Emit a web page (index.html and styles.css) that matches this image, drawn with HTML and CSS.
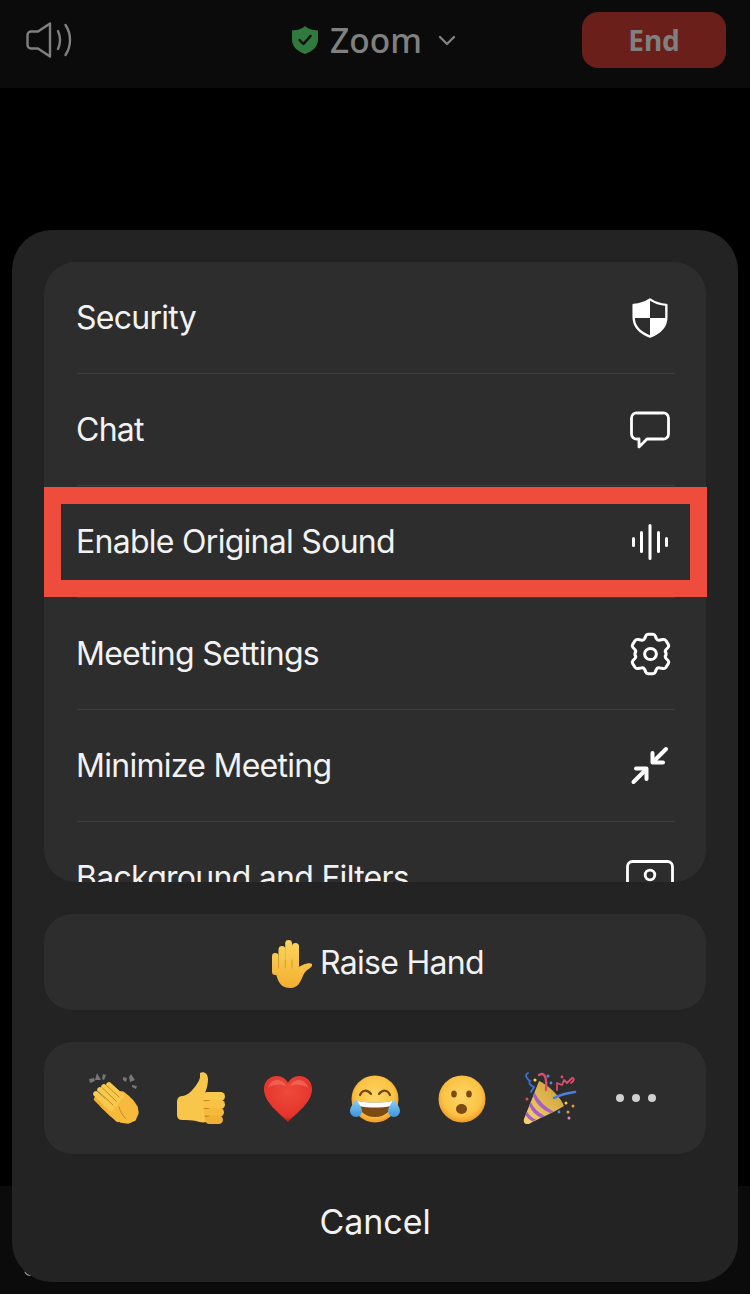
FILE: index.html
```html
<!DOCTYPE html>
<html lang="en">
<head>
    <meta charset="UTF-8">
    <meta name="viewport" content="width=device-width, initial-scale=1.0">
    <title>Zoom Meeting Menu</title>
    <link rel="stylesheet" href="styles.css">
</head>
<body>
    <svg class="defs" width="0" height="0">
        <defs>
            <linearGradient id="skin" x1="0" y1="0" x2="0" y2="1">
                <stop offset="0" stop-color="#fbd25a"/>
                <stop offset="1" stop-color="#f0a92c"/>
            </linearGradient>
            <linearGradient id="hand-skin" gradientUnits="userSpaceOnUse" x1="0" y1="0" x2="0" y2="48">
                <stop offset="0" stop-color="#fbd65e"/>
                <stop offset="1" stop-color="#f3ae30"/>
            </linearGradient>
            <radialGradient id="face" cx="0.5" cy="0.45" r="0.55">
                <stop offset="0" stop-color="#fcd667"/>
                <stop offset="0.75" stop-color="#fbc344"/>
                <stop offset="1" stop-color="#ee9a28"/>
            </radialGradient>
            <radialGradient id="red" cx="0.5" cy="0.35" r="0.65">
                <stop offset="0" stop-color="#ef4a3c"/>
                <stop offset="0.8" stop-color="#e5352b"/>
                <stop offset="1" stop-color="#b81c1a"/>
            </radialGradient>
            <linearGradient id="tear" x1="0" y1="0" x2="0" y2="1">
                <stop offset="0" stop-color="#8fd0f5"/>
                <stop offset="1" stop-color="#3c95dc"/>
            </linearGradient>
            <linearGradient id="cone" x1="0" y1="1" x2="1" y2="0">
                <stop offset="0" stop-color="#f7d66c"/>
                <stop offset="1" stop-color="#c99a35"/>
            </linearGradient>
        </defs>
    </svg>

    <!-- Meeting top bar, dimmed behind the sheet -->
    <header class="topbar">
        <svg class="speaker" viewBox="0 0 46 36" fill="none" stroke="#808080" stroke-width="2.4" stroke-linecap="round" stroke-linejoin="round">
            <path d="M24 1.500 12 9.500H5a3.500 3.500 0 0 0-3.500 3.500v10A3.500 3.500 0 0 0 5 26.500h7l12 8z"/>
            <path d="M32 9c2.500 5.500 2.500 12.500 0 18"/>
            <path d="M39.500 3c6 9 6 21 0 30"/>
        </svg>
        <div class="title">
            <svg class="title-shield" viewBox="0 0 26 28">
                <path d="M13 0c3 3 7 4 13 4.500v9C26 21 20 25.500 13 28 6 25.500 0 21 0 13.500v-9C6 4 10 3 13 0z" fill="#2f7a3c"/>
                <path d="M7.500 14l4 4 7-8" fill="none" stroke="#0b0b0b" stroke-width="2.400" stroke-linecap="round" stroke-linejoin="round"/>
            </svg>
            <span class="title-text">Zoom</span>
            <svg class="title-chevron" viewBox="0 0 18 11" fill="none" stroke="#808080" stroke-width="2.400" stroke-linecap="round" stroke-linejoin="round">
                <path d="M2 2l7 7 7-7"/>
            </svg>
        </div>
        <div class="end-btn">End</div>
    </header>

    <main class="stage"></main>

    <footer class="bottombar">
        <svg class="sliver" viewBox="0 0 10 6" fill="none" stroke="#8a8a8a" stroke-width="1.200" stroke-linecap="round">
            <path d="M1 1c1 2.500 3 3.500 7 3.500"/>
        </svg>
    </footer>

    <!-- Action sheet -->
    <section class="sheet">
        <div class="menu">
            <div class="menu-row">
                <span>Security</span>
                <svg class="icon" viewBox="0 0 40 44">
                    <path d="M20 1.500C25 5 31 7 38 7.500V21c0 10-7.500 17.500-18 21.500C9.500 38.500 2 31 2 21V7.500C9 7 15 5 20 1.500z" fill="none" stroke="#fff" stroke-width="2.600" stroke-linejoin="round"/>
                    <path d="M20 1.500V22H2V7.500C9 7 15 5 20 1.500z" fill="#fff"/>
                    <path d="M20 22h18c0 10-7.500 16.500-18 20.500z" fill="#fff"/>
                </svg>
            </div>
            <div class="menu-row">
                <span>Chat</span>
                <svg class="icon" viewBox="0 0 40 37" fill="none" stroke="#fff" stroke-width="2.800" stroke-linejoin="round">
                    <path d="M7 1.500h26a5 5 0 0 1 5.500 5v16a5 5 0 0 1-5.500 5H17L9 35.500V27.500H7a5 5 0 0 1-5.500-5v-16a5 5 0 0 1 5.500-5z"/>
                </svg>
            </div>
            <div class="menu-row">
                <span>Enable Original Sound</span>
                <svg class="icon icon-wave" viewBox="0 0 40 36" fill="#fff">
                    <rect x="1" y="13" width="3" height="10" rx="1.500"/>
                    <rect x="9" y="7" width="3" height="22" rx="1.500"/>
                    <rect x="17.500" y="0" width="3" height="36" rx="1.500"/>
                    <rect x="26" y="7" width="3" height="22" rx="1.500"/>
                    <rect x="34" y="13" width="3" height="10" rx="1.500"/>
                </svg>
            </div>
            <div class="menu-row">
                <span>Meeting Settings</span>
                <svg class="icon icon-gear" viewBox="0 0 40 40" preserveAspectRatio="none" fill="none" stroke="#fff" stroke-width="2.600" stroke-linejoin="round">
                    <path d="M16 3.500a2.500 2.500 0 0 1 2-1.500h4a2.500 2.500 0 0 1 2 1.500l1 2.500a2.500 2.500 0 0 0 3 1.300l2.700-.5a2.500 2.500 0 0 1 2.500 1.100l2 3.400a2.500 2.500 0 0 1-.2 2.700L33.200 16a2.500 2.500 0 0 0 0 3.100v1.800a2.500 2.500 0 0 0 0 3.100l1.800 2a2.500 2.500 0 0 1 .2 2.700l-2 3.400a2.500 2.500 0 0 1-2.500 1.100l-2.700-.5a2.500 2.500 0 0 0-3 1.300l-1 2.500a2.500 2.500 0 0 1-2 1.500h-4a2.500 2.500 0 0 1-2-1.500l-1-2.500a2.500 2.500 0 0 0-3-1.300l-2.700.5a2.500 2.500 0 0 1-2.500-1.100l-2-3.400a2.500 2.500 0 0 1 .2-2.700l1.800-2a2.500 2.500 0 0 0 0-3.100v-1.800a2.500 2.500 0 0 0 0-3.100L5 14a2.500 2.500 0 0 1-.2-2.700l2-3.400a2.500 2.500 0 0 1 2.500-1.100l2.700.5a2.500 2.500 0 0 0 3-1.300z"/>
                    <circle cx="20" cy="20" r="5"/>
                </svg>
            </div>
            <div class="menu-row">
                <span>Minimize Meeting</span>
                <svg class="icon" viewBox="0 0 40 40" fill="none" stroke="#fff" stroke-width="4" stroke-linecap="round" stroke-linejoin="round">
                    <path d="M36 3 24 15"/>
                    <path d="M22.500 7v9.500H33"/>
                    <path d="M3.500 36 15 24.500"/>
                    <path d="M6 22.500H16.500V33"/>
                </svg>
            </div>
            <div class="menu-row">
                <span>Background and Filters</span>
                <svg class="icon icon-wide" viewBox="0 0 48 36" fill="none" stroke="#fff" stroke-width="2.800">
                    <rect x="1.500" y="1.500" width="45" height="33" rx="5"/>
                    <circle cx="24" cy="15" r="4.800"/>
                </svg>
            </div>
        </div>

        <!-- Highlight drawn over the third row -->
        <div class="highlight"></div>

        <div class="raise-hand">
            <svg class="hand" viewBox="0 0 40 48" fill="url(#hand-skin)">
                <rect x="0" y="13" width="6.500" height="22" rx="3.250"/>
                <rect x="6.500" y="6" width="7" height="24" rx="3.500"/>
                <rect x="13.200" y="0" width="6.800" height="26" rx="3.400"/>
                <rect x="20" y="3" width="7" height="26" rx="3.500"/>
                <path d="M2 24h24v3c3-.5 5-3 9-3.500 3-.5 6 0 5 2.500-1 2-4 3-6 5-3 3-4 8-6 11-2 4-6 6-10 6-6 0-10-3-12-8-2-5-3-10-4-16z"/>
                <path d="M6.500 22v6M13.300 20v8M20 20v8" stroke="#d99a24" stroke-width="0.900" fill="none" stroke-linecap="round"/>
            </svg>
            <span>Raise Hand</span>
        </div>

        <div class="reactions">
            <div class="reaction">
                <svg class="emoji" viewBox="0 0 52 52">
                    <path d="M9 1l4 7-6 0zM15 2l3 1-2 5-2-1zM1 7l5-1 1 3-5 2zM35 5l4 1-1 4-3-2zM43 2l4 6-5 2-1-5zM44 13l5 1-1 3-4-2z" fill="#777"/>
                    <!-- back hand -->
                    <g fill="none" stroke="#efb033" stroke-width="6" stroke-linecap="round">
                        <path d="M9 27 24 42"/>
                        <path d="M15 33 30 47"/>
                    </g>
                    <!-- palm and thumb -->
                    <path d="M20 20 35 20l5 4 5 5 4 6 1 6-3 7-7 3-7-1-8-5-9-11z" fill="#f6bb3c" stroke="#f6bb3c" stroke-width="1.500" stroke-linejoin="round"/>
                    <!-- fingers -->
                    <g fill="none" stroke="#f9c94e" stroke-width="5.600" stroke-linecap="round">
                        <path d="M8 22 23 36"/>
                        <path d="M12 18 27 32"/>
                        <path d="M16 15 30 28"/>
                        <path d="M21 13 33 24"/>
                    </g>
                    <path d="M10.500 19.500 25 33M14.500 16 28.500 29.500M18.500 13.500 31 25M31 35c1 4 3 8 7 12" stroke="#c98a20" stroke-width="1" fill="none" stroke-linecap="round"/>
                </svg>
            </div>
            <div class="reaction">
                <svg class="emoji emoji-thumb" viewBox="0 0 50 52">
                    <path d="M24 1c4-2 8 1 8 6 0 5-1 9-3 14l1 29c-3 1-7 0-10-1-4-1-9-1-14-1-4 0-5-3-5-6V30c0-4 2-6 6-6 4-1 8-4 11-8 4-5 6-9 6-11 0-2 0-4 0-4z" fill="#f8c64a"/>
                    <rect x="27" y="20" width="22" height="9" rx="4.500" fill="#f9c94e"/>
                    <rect x="28" y="28" width="21" height="9" rx="4.500" fill="#f8c244"/>
                    <rect x="28" y="36" width="20" height="8.500" rx="4.250" fill="#f5ba3a"/>
                    <rect x="29" y="43.500" width="18" height="8.500" rx="4.250" fill="#f1b033"/>
                    <path d="M33 28.500H28M33 36.500H28M33 44H29" stroke="#c98a20" stroke-width="1.100" stroke-linecap="round"/>
                </svg>
            </div>
            <div class="reaction">
                <svg class="emoji emoji-round" viewBox="0 0 50 48">
                    <path d="M25 47C15 37 1 27 1 14 1 6 7 1 13.500 1 19 1 23 4 25 8c2-4 6-7 11.500-7C43 1 49 6 49 14c0 13-14 23-24 33z" fill="url(#red)"/>
                    <path d="M5 13c1-5 5-8 9-8s7 2 9 6c-5-2-13-2-18 2zM27 11c2-4 5-6 9-6s8 3 9 8c-5-4-13-4-18-2z" fill="#f47a70" opacity="0.55"/>
                </svg>
            </div>
            <div class="reaction">
                <svg class="emoji emoji-joy" viewBox="0 0 52 48">
                    <circle cx="26" cy="24" r="23.500" fill="url(#face)"/>
                    <path d="M11 20c2-5 7-6 11-1M30 19c4-5 9-4 11 1" fill="none" stroke="#75460f" stroke-width="2.200" stroke-linecap="round"/>
                    <path d="M9 26c10 2 24 2 34 0 0 10-7 16-17 16S9 36 9 26z" fill="#7c4a12"/>
                    <path d="M9 26c10 2 24 2 34 0 0 2-.3 3.500-1 5-10 2-22 2-32 0-.7-1.500-1-3-1-5z" fill="#fff"/>
                    <path d="M7 24c2 4 6 8 6 12a6 6 0 0 1-12 0c0-4 4-8 6-12z" fill="url(#tear)"/>
                    <path d="M45 24c-2 4-6 8-6 12a6 6 0 0 0 12 0c0-4-4-8-6-12z" fill="url(#tear)"/>
                </svg>
            </div>
            <div class="reaction">
                <svg class="emoji emoji-round" viewBox="0 0 50 48">
                    <circle cx="25" cy="24" r="23.500" fill="url(#face)"/>
                    <ellipse cx="17" cy="19" rx="2.800" ry="3.500" fill="#7c4a12"/>
                    <ellipse cx="32" cy="19" rx="2.800" ry="3.500" fill="#7c4a12"/>
                    <ellipse cx="24.500" cy="34" rx="5.500" ry="5" fill="#7c4a12"/>
                </svg>
            </div>
            <div class="reaction">
                <svg class="emoji emoji-party" viewBox="0 0 56 52">
                    <path d="M18 9C26 12 40 25 43 34 32 41 18 46 8 52 4 53 2 50 3 47z" fill="url(#cone)"/>
                    <path d="M13.500 20.400Q20 33 32.500 39.400L29 41Q17 36 12 24zM9.750 29.900Q14 39 23.750 43.900L20.250 45.700Q12 42 8.250 33.700zM6 39.400Q9 45 15 47.600L11.500 49.400Q7 47 4.500 43.200z" fill="#a65fc4"/>
                    <path d="M33 26c6-3 13-5 21-6" fill="none" stroke="#4a7fe0" stroke-width="2.600" stroke-linecap="round"/>
                    <path d="M7 1c-4 2-1 6 2 8-2 2 1 5 4 6-1 2-2 3-3 5" fill="none" stroke="#3e6fd8" stroke-width="1.800" stroke-linecap="round"/>
                    <path d="M18 3c6-4 8 4 7 15" fill="none" stroke="#df4b6b" stroke-width="2.400" stroke-linecap="round"/>
                    <path d="M36 18V11l5 2 2-5 3 3 5-5c3 0 2 3-1 5" fill="none" stroke="#df4b6b" stroke-width="1.800" stroke-linecap="round" stroke-linejoin="round"/>
                    <circle cx="14" cy="8" r="1.600" fill="#f3d24c"/>
                    <circle cx="27" cy="4" r="1.500" fill="#4a90e2"/>
                    <circle cx="30" cy="11" r="1.400" fill="#4a90e2"/>
                    <circle cx="41" cy="5" r="1.400" fill="#df4b6b"/>
                    <circle cx="6" cy="27" r="1.500" fill="#d8504f"/>
                    <circle cx="45" cy="31" r="1.500" fill="#f3d24c"/>
                    <circle cx="52" cy="34" r="1.500" fill="#e89a3c"/>
                    <circle cx="47" cy="40" r="1.500" fill="#e89a3c"/>
                    <circle cx="38" cy="40" r="1.400" fill="#4a90e2"/>
                    <circle cx="48" cy="46" r="1.500" fill="#e98ab0"/>
                </svg>
            </div>
            <div class="reaction">
                <div class="dots"><i></i><i></i><i></i></div>
            </div>
        </div>

        <div class="cancel">Cancel</div>
    </section>
</body>
</html>
```

FILE: styles.css
```css
/* Global Reset */
* {
    margin: 0;
    padding: 0;
    box-sizing: border-box;
}

body {
    font-family: Inter, 'Liberation Sans', sans-serif;
    background: #000;
    color: #f2f2f2;
    width: 750px;
    height: 1294px;
    display: flex;
    flex-direction: column;
    overflow: hidden;
    position: relative;
}

.defs {
    position: absolute;
}

/* Top bar */
.topbar {
    height: 88px;
    background: #0b0b0b;
    display: flex;
    align-items: center;
    justify-content: space-between;
    padding: 0 24px 8px 26px;
    position: relative;
}

.speaker {
    width: 46px;
    height: 36px;
}

.title {
    display: flex;
    align-items: center;
    position: absolute;
    left: 292px;
    top: 22px;
}

.title-shield {
    width: 26px;
    height: 28px;
    margin-right: 12px;
}

.title-text {
    font-family: 'Noto Sans', sans-serif;
    font-size: 33.5px;
    font-weight: 500;
    line-height: 36px;
    color: #808080;
}

.title-chevron {
    width: 18px;
    height: 11px;
    margin-left: 16px;
}

.end-btn {
    width: 144px;
    height: 56px;
    background: #6a1f1b;
    border-radius: 16px;
    color: #808080;
    font-family: 'Noto Sans', sans-serif;
    font-size: 28px;
    font-weight: 700;
    display: flex;
    align-items: center;
    justify-content: center;
}

.stage {
    flex: 1;
}

.bottombar {
    height: 108px;
    background: #0b0b0b;
    position: relative;
}

.sliver {
    position: absolute;
    left: 24px;
    top: 85px;
    width: 10px;
    height: 6px;
}

/* Action sheet */
.sheet {
    position: absolute;
    left: 12px;
    top: 230px;
    width: 726px;
    height: 1052px;
    background: #232323;
    border-radius: 40px;
    padding: 32px;
    display: flex;
    flex-direction: column;
    gap: 32px;
}

.menu {
    height: 620px;
    flex: none;
    background: #2d2d2d;
    border-radius: 32px;
    overflow: hidden;
}

.menu-row {
    height: 112px;
    margin: 0 31px 0 33px;
    display: flex;
    align-items: center;
    justify-content: space-between;
    border-bottom: 1px solid #3e3e3e;
    font-size: 32px;
    letter-spacing: -0.72px;
}

.menu-row span {
    margin-left: -1px;
}

.icon {
    width: 40px;
    height: 40px;
    margin-right: 5px;
}

.icon-wave {
    margin-right: 4px;
}

.icon-gear {
    width: 47px;
    height: 44px;
    margin-right: 1px;
}

.icon-wide {
    width: 48px;
    height: 36px;
    margin-right: 1px;
}

.highlight {
    position: absolute;
    left: 32px;
    top: 257px;
    width: 663px;
    height: 110px;
    border: 17px solid #ee4c3c;
}

.raise-hand {
    height: 96px;
    flex: none;
    background: #2d2d2d;
    border-radius: 28px;
    display: flex;
    align-items: center;
    justify-content: center;
    gap: 8px;
    padding-left: 6px;
    font-size: 32px;
    letter-spacing: -0.72px;
}

.hand {
    width: 40px;
    height: 48px;
    margin-top: 4px;
}

.reactions {
    height: 112px;
    flex: none;
    background: #2d2d2d;
    border-radius: 28px;
    padding: 0 27px;
    display: grid;
    grid-template-columns: repeat(7, 1fr);
    align-items: center;
    justify-items: center;
}

.reaction {
    display: flex;
    align-items: center;
    justify-content: center;
}

.emoji {
    width: 52px;
    height: 52px;
}

.emoji-thumb {
    width: 50px;
}

.emoji-round {
    width: 50px;
    height: 48px;
    margin-top: 1px;
}

.emoji-joy {
    height: 48px;
    margin-top: 1px;
}

.emoji-party {
    width: 56px;
}

.dots {
    display: flex;
    gap: 8px;
}

.dots i {
    width: 8px;
    height: 8px;
    border-radius: 50%;
    background: #d0d0d0;
}

.cancel {
    text-align: center;
    font-size: 34px;
    letter-spacing: -0.05px;
    line-height: 48px;
    margin-top: 12px;
}
```
